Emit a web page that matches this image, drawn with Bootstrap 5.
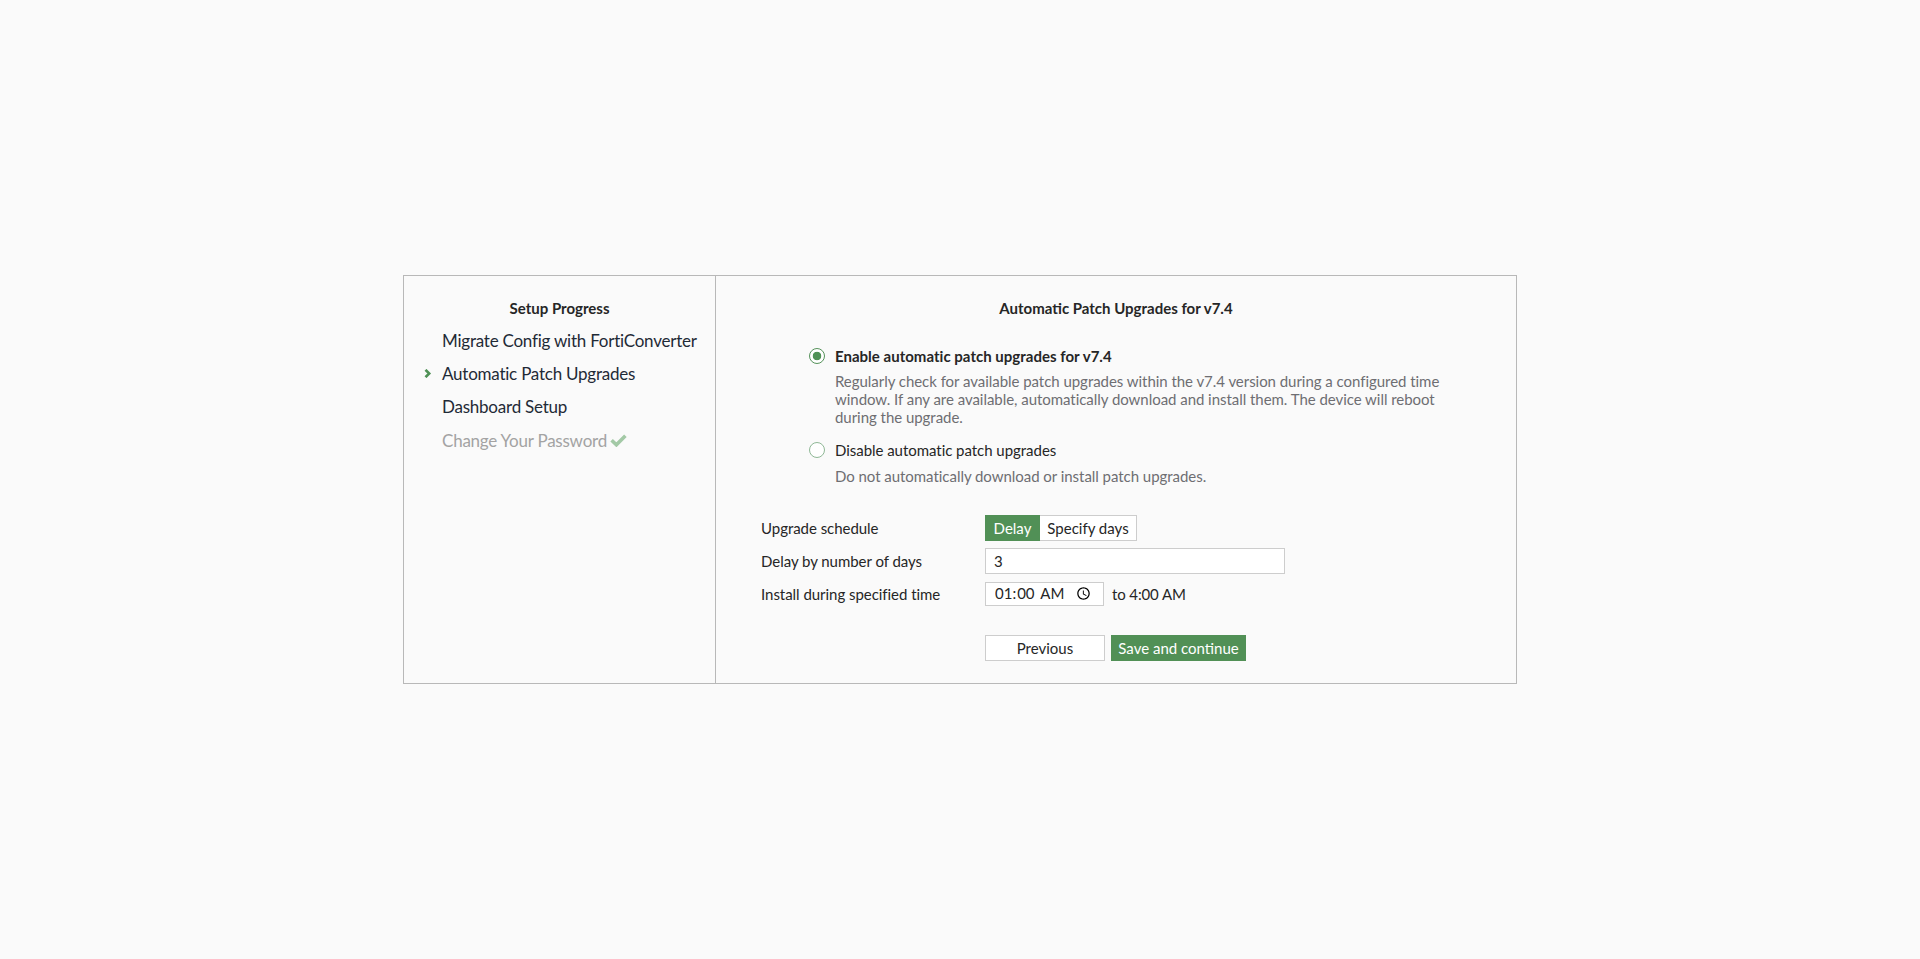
<!DOCTYPE html>
<html lang="en">
<head>
  <meta charset="UTF-8">
  <title>Setup</title>
  <link href="https://cdn.jsdelivr.net/npm/bootstrap@5.3.2/dist/css/bootstrap.min.css" rel="stylesheet">
  <style>
    body { background: #fafafa; font-family: Lato, "Liberation Sans", sans-serif; font-size: 15px; color: #262626; letter-spacing: -0.04px; }
    .wizard-page { height: 959px; }
    .wizard-panel { width: 1114px; height: 409px; border: 1px solid #b8b8b8; }
    .wizard-side { width: 312px; padding: 20px 0 0 18px; border-right: 1px solid #b8b8b8; }
    .wizard-main { padding: 20px 0 0 45px; }
    .panel-title { font-size: 15px; font-weight: 700; line-height: 24px; color: #262626; letter-spacing: 0; }
    .side-title { margin-right: 18px; margin-bottom: 4px; }
    .step-item { font-size: 17px; line-height: 33px; height: 33px; color: #1f2a36; letter-spacing: -0.23px; }
    .step-mark { width: 20px; flex: none; }
    .step-chevron { margin-left: 2px; }
    .step-done { color: #a3a3a3; margin-top: 1px; }
    .step-check { margin-left: 3px; }
    .main-title { margin-bottom: 26px; margin-right: 45px; }
    .choice-list { padding-left: 47px; width: 700px; }
    .choice-radio { appearance: none; width: 16px; height: 16px; flex: none; margin: 2px 10px 0 1px; border-radius: 50%; border: 1px solid #8fb896; background: #fff; }
    .choice-radio:checked { border-color: #55925a; background: radial-gradient(circle, #4f9156 0 4px, #fff 4.6px); }
    .choice-name { line-height: 20px; color: #262626; }
    .choice-name.fw-bold { letter-spacing: 0.02px; }
    .choice-help { line-height: 18px; color: #6e6e72; margin-top: 6px; width: 612px; }
    .choice-gap { margin-top: 14px; }
    .choice-gap .choice-help { margin-top: 7px; }
    .field-rows { margin-top: 26px; }
    .field-row { min-height: 33px; }
    .field-label { width: 224px; flex: none; color: #262626; padding-top: 1px; }
    .seg-btn { height: 26px; padding: 0; font-size: 15px; line-height: 24px; border: 1px solid #cdcdcd; background: #fff; color: #262626; border-radius: 0; }
    .seg-on { width: 55px; background: #519056; border-color: #519056; color: #fff; }
    .seg-off { width: 97px; border-left: 0; }
    .days-input { width: 300px; height: 26px; padding: 0 8px; border: 1px solid #cdcdcd; background: #fff; font-size: 15px; color: #262626; border-radius: 0; outline: 0; }
    .time-box { width: 119px; height: 24px; padding: 0 8px 0 9px; border: 1px solid #cdcdcd; background: #fff; font-family: inherit; font-size: 15px; color: #262626; outline: 0; }
    .time-to { margin-left: 8px; padding-top: 1px; letter-spacing: -0.12px; }
    .action-row { margin-top: 25px; padding-left: 224px; }
    .action-btn { height: 26px; padding: 0; font-size: 15px; line-height: 24px; border-radius: 0; border: 1px solid #cdcdcd; background: #fff; color: #262626; }
    .action-prev { width: 120px; }
    .action-save { width: 135px; background: #519056; border-color: #519056; color: #fff; margin-left: 6px; }
  </style>
</head>
<body>
  <div class="wizard-page d-flex align-items-center justify-content-center">
    <div class="wizard-panel d-flex">
      <div class="wizard-side">
        <div class="panel-title side-title text-center">Setup Progress</div>
        <div class="step-item d-flex"><span class="step-mark"></span>Migrate Config with FortiConverter</div>
        <div class="step-item d-flex align-items-center">
          <span class="step-mark">
            <svg class="d-block step-chevron" width="8" height="9" viewBox="0 0 8 9"><path d="M1.5 .8l3.7 3.7-3.7 3.7" fill="none" stroke="#4f9156" stroke-width="2.6"/></svg>
          </span>Automatic Patch Upgrades</div>
        <div class="step-item d-flex"><span class="step-mark"></span>Dashboard Setup</div>
        <div class="step-item step-done d-flex align-items-center"><span class="step-mark"></span>Change Your Password
          <svg class="step-check" width="17" height="13" viewBox="0 0 17 13"><path d="M1.6 6.2l4.8 4.6 9-9" fill="none" stroke="#a3c9a6" stroke-width="3.6"/></svg>
        </div>
      </div>
      <div class="wizard-main flex-grow-1">
        <div class="panel-title main-title text-center">Automatic Patch Upgrades for v7.4</div>
        <div class="choice-list">
          <div class="d-flex">
            <input class="choice-radio" type="radio" name="patch" checked>
            <div>
              <div class="choice-name fw-bold">Enable automatic patch upgrades for v7.4</div>
              <div class="choice-help">Regularly check for available patch upgrades within the v7.4 version during a configured time window. If any are available, automatically download and install them. The device will reboot during the upgrade.</div>
            </div>
          </div>
          <div class="d-flex choice-gap">
            <input class="choice-radio" type="radio" name="patch">
            <div>
              <div class="choice-name">Disable automatic patch upgrades</div>
              <div class="choice-help">Do not automatically download or install patch upgrades.</div>
            </div>
          </div>
        </div>
        <div class="field-rows">
          <div class="field-row d-flex align-items-center">
            <div class="field-label">Upgrade schedule</div>
            <div class="d-flex">
              <button class="seg-btn seg-on" type="button">Delay</button>
              <button class="seg-btn seg-off" type="button">Specify days</button>
            </div>
          </div>
          <div class="field-row d-flex align-items-center">
            <div class="field-label">Delay by number of days</div>
            <input class="days-input" type="text" value="3">
          </div>
          <div class="field-row d-flex align-items-center">
            <div class="field-label">Install during specified time</div>
            <input class="time-box" type="time" value="01:00">
            <span class="time-to">to 4:00 AM</span>
          </div>
        </div>
        <div class="action-row d-flex">
          <button class="action-btn action-prev" type="button">Previous</button>
          <button class="action-btn action-save" type="button">Save and continue</button>
        </div>
      </div>
    </div>
  </div>
  <script src="https://cdn.jsdelivr.net/npm/bootstrap@5.3.2/dist/js/bootstrap.bundle.min.js"></script>
</body>
</html>
